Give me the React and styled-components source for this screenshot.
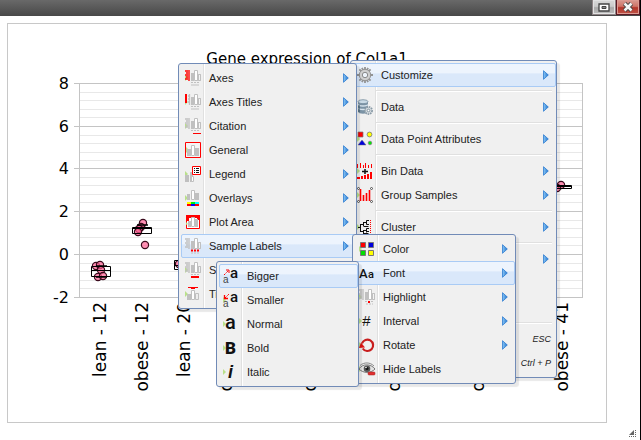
import React from "react";
import styled, { createGlobalStyle, css } from "styled-components";

const Global = createGlobalStyle`
  *, *::before, *::after { box-sizing: border-box; }
  body { margin: 0; background: #fff; font-family: "Liberation Sans", Arial, sans-serif; }
`;

const Window = styled.div`
  min-height: 100vh;
  display: flex;
  flex-direction: column;
  border-right: 1px solid #000;
  background: #fff;
  position: relative;
  overflow: hidden;
`;

const TitleBar = styled.header`
  height: 16px;
  display: flex;
  justify-content: flex-end;
  background: linear-gradient(#696969, #484848);
`;

const WindowButton = styled.button`
  width: 24px;
  height: 15px;
  padding: 0;
  display: flex;
  align-items: center;
  justify-content: center;
  border: 1px solid ${(p) => (p.$danger ? "#5c1a24" : "#8f8587")};
  border-top: 0;
  background: ${(p) =>
    p.$danger
      ? "linear-gradient(#d89a92, #cf7468 45%, #b3352a 55%, #bf5346)"
      : "linear-gradient(#d9d9d9, #cacaca 45%, #a9a9a9 55%, #bdbdbd)"};
  box-shadow: inset 0 0 0 1px ${(p) => (p.$danger ? "#dc9a92" : "#e2e2e2")};
`;

const Stage = styled.main`
  flex: 1;
  padding: 7px 33px 17px 7px;
`;

const ChartPanel = styled.section`
  border: 1px solid #c8c8c8;
`;

const ChartSvg = styled.svg`
  display: block;
  width: 100%;
  height: auto;
  font-family: "DejaVu Sans", Verdana, sans-serif;
`;

const Grip = styled.svg`
  position: absolute;
  right: 3px;
  bottom: 2px;
`;

const MenuPanel = styled.ul`
  position: absolute;
  width: ${(p) => p.$width}px;
  margin: 0;
  padding: 2px 0 2px 2px;
  list-style: none;
  border: 1px solid #718bb7;
  border-radius: 3px;
  background: linear-gradient(
      to right,
      transparent 24px,
      #e0e0e0 24px 25px,
      #fff 25px 26px,
      transparent 26px
    )
    #f0f0f0;
  box-shadow: 3px 3px 1px rgba(0, 0, 0, 0.09);
  ${(p) => p.$side === "root" && css`left: 350px; top: 60px;`}
  ${(p) => p.$side === "left" && css`right: calc(100% - 4px); top: 0;`}
  ${(p) => p.$side === "right" && css`left: calc(100% - 4px); top: 0;`}
`;

const MenuRow = styled.li`
  height: 24px;
  ${(p) => p.$open && css`position: relative; z-index: 1;`}
`;

const MenuButton = styled.button`
  width: 100%;
  height: 24px;
  padding: 0 6px 0 3px;
  display: flex;
  align-items: center;
  gap: 8px;
  border: 1px solid ${(p) => (p.$active ? "#a9cbf5" : "transparent")};
  border-radius: 2px;
  background: ${(p) =>
    p.$active ? "linear-gradient(#edf4fd 0 40%, #dae8fa 45% 100%)" : "transparent"};
  color: #222;
  font: 11px/14px "Liberation Sans", Arial, sans-serif;
  text-align: left;
`;

const Label = styled.span`
  flex: 1;
  white-space: nowrap;
`;

const Shortcut = styled.kbd`
  font: italic 9px/14px "Liberation Sans", Arial, sans-serif;
  margin-right: -2px;
`;

const Divider = styled.li`
  height: 2px;
  margin: 3px 4px 3px 23px;
  border-top: 1px solid #e0e0e0;
  border-bottom: 1px solid #fff;
`;

const IconBox = styled.svg`
  flex: none;
  width: 16px;
  height: 16px;
  overflow: visible;
`;

const Arrow = () => (
  <svg width="6" height="10" viewBox="0 0 6 10" aria-hidden="true">
    <defs>
      <linearGradient id="arrowFill" x1="0" y1="0" x2="1" y2="0">
        <stop offset="0" stopColor="#8cc8f4" />
        <stop offset="1" stopColor="#1f72cf" />
      </linearGradient>
    </defs>
    <path d="M.5 .7 5.3 5 .5 9.3Z" fill="url(#arrowFill)" stroke="#2c7bd0" strokeWidth=".8" />
  </svg>
);

const G = "#c0c0c0";
const R = "#ff0000";
const Bars = () => (
  <>
    <path d="M6 3h3v8H6zM12 4h4v7h-4z" fill={G} />
    <path d="M9.500 .5h3v10h-3z" fill="#fff" stroke={G} />
    <path d="M13.500 4.500h2v6h-2z" fill="#f4f4f4" stroke={G} />
  </>
);
const Axis = ({ color = G }) => (
  <path d="M4 0v11M0 1h3M1 3h2M0 5h3M1 7h2M0 9h3" stroke={color} strokeWidth="1.400" fill="none" />
);
const Dashes = ({ first = G }) => (
  <>
    <path d="M6 12.500h8" stroke={first} strokeWidth={first === G ? 1 : 2} strokeDasharray="2 1" />
    <path d="M6 15h8" stroke={G} strokeDasharray={first === G ? "none" : "2 1"} />
  </>
);
const Leaf = () => <path d="M0 5v6l3-3z" fill="#b9e08a" />;
const Letter = ({ x, y, size, italic, weight = 400, children, fill = "#111", family = "Liberation Sans" }) => (
  <text x={x} y={y} fontSize={size} fontWeight={weight} fontStyle={italic ? "italic" : "normal"} fontFamily={`"${family}", sans-serif`} fill={fill}>
    {children}
  </text>
);

const icons = {
  axes: <><Leaf /><Axis color={R} /><Bars /><Dashes /></>,
  axesTitles: <><Leaf /><path d="M0 0h2v9H0z" fill={R} /><path d="M4.500 0v11M3 2h1M3 5h1M3 8h1" stroke={G} strokeWidth="1.300" /><Bars /><Dashes /></>,
  citation: <><Leaf /><Axis /><Bars /><path d="M6 12.500h8" stroke={G} strokeDasharray="2 1" /><path d="M8 15.500h8" stroke={R} /></>,
  general: <><path d="M.5 .5h15v15H.5z" fill="#f4f4f4" stroke={R} /><path d="M1 5v6l3-3z" fill="#b9e08a" /><path d="M2 7h4v7H2z" fill={G} /><path d="M6.500 3.500h3v10h-3z" fill="#fff" stroke={G} /><path d="M10 6h4v8h-4z" fill={G} /></>,
  legend: <><Leaf /><path d="M0 9h4v7H0zM5 6h3v10H5z" fill={G} /><path d="M6.500 10.500h2v5h-2z" fill="#fff" stroke={G} /><path d="M7.500 .5h8v8h-8z" fill="#fff" stroke={R} /><path d="M9 2.500h1M11 2.500h3M9 4.500h1M11 4.500h3M9 6.500h1M11 6.500h3" stroke="#111" /></>,
  overlays: <><Leaf /><path d="M2 4h3v6H2z" fill={G} /><path d="M6.500 .5h3v9h-3z" fill="#fff" stroke={G} /><path d="M10 3h4v7h-4z" fill={G} /><path d="M2 12h4v2H2z" fill="#ff0" /><path d="M6 12h4v2H6z" fill="#0e0" /><path d="M10 12h4v2h-4z" fill="#0ff" /><path d="M2 14h4v2H2zM10 14h4v2h-4z" fill={R} /><path d="M6 14h4v2H6z" fill="#00f" /></>,
  plotArea: <><path d="M1.500 1.500h13v13h-13z" fill="#fff" stroke={R} /><path d="M1 1h14v3H1zM1 4h3v3H1zM12 3h3v3h-3z" fill={R} /><path d="M3 7h3v6H3z" fill={G} /><path d="M6.500 3.500h3v9h-3z" fill="#fff" stroke={G} /><path d="M10 5h3v8h-3z" fill={G} /><path d="M1 8v3l2-1z" fill="#b9e08a" /></>,
  sampleLabels: <><Axis /><Bars /><Dashes first={R} /></>,
  sampleTitles: <><Leaf /><Axis /><Bars /><path d="M6 12.500h8" stroke={G} strokeDasharray="2 1" /><path d="M6 15h8" stroke={R} strokeWidth="2" /></>,
  titles: <><Leaf /><path d="M3 1.500h10" stroke={R} /><path d="M6 2.500h4" stroke={R} /><path d="M2 8h4v6H2z" fill={G} /><path d="M6.500 4.500h3v9h-3z" fill="#fff" stroke={G} /><path d="M10.500 7.500h3v6h-3z" fill="#eee" stroke={G} /></>,
  gear: (
    <>
      <path d="M8 0v16M0 8h16M2.400 2.400l11.200 11.200M13.600 2.400 2.400 13.600M5 .8l6 14.400M11 .8 5 15.200" stroke="#949494" strokeWidth="1.800" />
      <circle cx="8" cy="8" r="5.700" fill="#cfcfcf" stroke="#949494" />
      <circle cx="8" cy="8" r="2.700" fill="#edf3fa" stroke="#8a8a8a" />
    </>
  ),
  data: (
    <>
      <path d="M1 2.500v10c0 3 10 3 10 0v-10z" fill="#7b93a5" />
      <path d="M1 5.500c1 2 9 2 10 0M1 9c1 2 9 2 10 0" stroke="#d5e2ec" strokeWidth="1.300" fill="none" />
      <ellipse cx="6" cy="2.700" rx="5" ry="2" fill="#c9dae6" stroke="#657f92" strokeWidth=".7" />
      <path d="M2 6v7" stroke="#3d596b" />
      <circle cx="11.500" cy="11.500" r="3.600" fill="#d3dadf" stroke="#899aa6" strokeWidth="1.700" strokeDasharray="1.600 .8" />
      <circle cx="11.500" cy="11.500" r="1.300" fill="#fff" stroke="#8496a2" />
    </>
  ),
  points: <><Leaf /><path d="M1 1h5v5H1z" fill={R} stroke="#777" strokeWidth=".7" /><circle cx="12.500" cy="3.500" r="2.400" fill="#ff0" stroke="#777" strokeWidth=".8" /><path d="M1 14 5 9l4 5z" fill="#00d" stroke="#777" strokeWidth=".5" /><circle cx="13" cy="12" r="1.800" fill="#0e0" stroke="#777" strokeWidth=".7" /></>,
  bin: <><Leaf /><path d="M.5 1v4M3.500 0v5M6.500 2v3M8.500 0v5M11.500 2v3M14.500 1v4" stroke={R} /><path d="M8 6v5M5 8.500h6" stroke="#111" strokeWidth="1.500" /><path d="M0 14h3v2H0zM4 13h2v3H4zM7 12h2v4H7zM10 11h2v5h-2zM13 9h2v7h-2z" fill={R} /></>,
  group: <><Leaf /><path d="M3.500 2v12M6.500 8v6M9.500 6v8M12.500 3v11" stroke={R} strokeWidth="1.600" /><g fill="#fff" stroke="#333" strokeWidth=".8"><circle cx="1.500" cy="1.500" r="1" /><circle cx="14.500" cy="1.500" r="1" /><circle cx="1.500" cy="14.500" r="1" /><circle cx="14.500" cy="14.500" r="1" /></g></>,
  cluster: <><Leaf /><path d="M1 8.500h2.500M3.500 5v8M3.500 5.500H6M3.500 12.500H6M6.500 3v4M6.500 11v4M6.500 3.500H9M6.500 7.500h5M6.500 11.500h3M6.500 14.500h5M9.500 1.500v4M9.500 1.500H12M9.500 5.500H12M9.500 9.500v4M9.500 9.500H12M9.500 12.500H12" stroke="#111" fill="none" /><path d="M13.500 1v14" stroke={R} strokeDasharray="1 1" /></>,
  color: <><Leaf /><g stroke="#777"><path d="M1.500 1.500h5v5h-5z" fill={R} /><path d="M9.500 1.500h5v5h-5z" fill="#00d" /><path d="M1.500 9.500h5v5h-5z" fill="#0d0" /><path d="M9.500 9.500h5v5h-5z" fill="#ff0" /></g></>,
  font: <><Letter x={0} y={13} size={13} weight={500} family="Roboto">A</Letter><Letter x={9} y={13} size={11} weight={500} family="Roboto">a</Letter></>,
  highlight: <><Leaf /><Axis /><Bars /><path d="M6 12.500h9M7 15h7" stroke={G} strokeDasharray="2 1" /><path d="M9 12h2v2H9z" fill={R} /></>,
  interval: <><Leaf /><Letter x={3} y={13} size={15} italic>#</Letter></>,
  rotate: <><Leaf /><path d="M3.700 11.500A5.700 5.700 0 1 0 3 6.500" fill="none" stroke="#c81e1e" strokeWidth="2.200" /><path d="M0 11 2 5.500 6 10.500z" fill="#e01414" /></>,
  hide: <><Leaf /><path d="M0 8C3 2.500 12 2.500 16 8 12 12.500 4 12.500 0 8z" fill="#e3e3e3" stroke="#777" /><circle cx="8" cy="7.700" r="3.300" fill="#555" /><circle cx="8" cy="7.500" r="1.500" fill="#111" /><circle cx="7" cy="6.500" r=".8" fill="#fff" /><path d="M1 4.500C5 1 11 1 15 5" stroke="#888" fill="none" /><rect x="9" y="11" width="7" height="3" rx="1" fill="#e03030" stroke="#a82020" strokeWidth=".5" /></>,
  bigger: <><Letter x={0} y={15} size={10} fill="#444">a</Letter><Letter x={7} y={10} size={15} weight={500} family="Roboto">a</Letter><path d="M1 7 5 3" stroke={R} strokeDasharray="1.500 .7" /><path d="M3 2h3v3" stroke={R} fill="none" /></>,
  smaller: <><Leaf /><Letter x={0} y={15} size={10} fill="#444">a</Letter><Letter x={7} y={10} size={15} weight={500} family="Roboto">a</Letter><path d="M2 6 6 2" stroke={R} strokeDasharray="1.500 .7" /><path d="M1.500 3v3.500H5" stroke={R} fill="none" strokeWidth="1.300" /></>,
  normal: <><Leaf /><Letter x={2} y={13} size={20} weight={500} family="Roboto">a</Letter></>,
  bold: <><Leaf /><Letter x={2} y={14} size={17} weight={900} family="Roboto">B</Letter></>,
  italic: <><Leaf /><Letter x={5} y={14} size={18} weight={700} italic>i</Letter></>,
};

const fontMenu = {
  width: 143,
  side: "left",
  items: [
    { icon: "bigger", label: "Bigger", active: true },
    { icon: "smaller", label: "Smaller" },
    { icon: "normal", label: "Normal" },
    { icon: "bold", label: "Bold" },
    { icon: "italic", label: "Italic" },
  ],
};

const labelsMenu = {
  width: 164,
  side: "right",
  items: [
    { icon: "color", label: "Color", more: true },
    { icon: "font", label: "Font", more: true, menu: fontMenu },
    { icon: "highlight", label: "Highlight", more: true },
    { icon: "interval", label: "Interval", more: true },
    { icon: "rotate", label: "Rotate", more: true },
    { icon: "hide", label: "Hide Labels" },
  ],
};

const customizeMenu = {
  width: 179,
  side: "left",
  items: [
    { icon: "axes", label: "Axes", more: true },
    { icon: "axesTitles", label: "Axes Titles", more: true },
    { icon: "citation", label: "Citation", more: true },
    { icon: "general", label: "General", more: true },
    { icon: "legend", label: "Legend", more: true },
    { icon: "overlays", label: "Overlays", more: true },
    { icon: "plotArea", label: "Plot Area", more: true },
    { icon: "sampleLabels", label: "Sample Labels", more: true, menu: labelsMenu },
    { icon: "sampleTitles", label: "Sample Titles", more: true },
    { icon: "titles", label: "Titles", more: true },
  ],
};

const rootMenu = {
  width: 207,
  side: "root",
  items: [
    { icon: "gear", label: "Customize", more: true, menu: customizeMenu },
    null,
    { icon: "data", label: "Data", more: true },
    null,
    { icon: "points", label: "Data Point Attributes", more: true },
    null,
    { icon: "bin", label: "Bin Data", more: true },
    { icon: "group", label: "Group Samples", more: true },
    null,
    { icon: "cluster", label: "Cluster", more: true },
    null,
    { label: "", more: true },
    { label: "" },
    { label: "" },
    null,
    { label: "", shortcut: "ESC" },
    { label: "", shortcut: "Ctrl + P" },
  ],
};

function Menu({ menu }) {
  return (
    <MenuPanel $width={menu.width} $side={menu.side} role="menu">
      {menu.items.map((item, i) =>
        item === null ? (
          <Divider key={i} role="separator" />
        ) : (
          <MenuRow key={i} $open={Boolean(item.menu)} role="none">
            <MenuButton type="button" role="menuitem" $active={item.active || item.menu}>
              <IconBox viewBox="0 0 16 16" aria-hidden="true">{icons[item.icon]}</IconBox>
              <Label>{item.label}</Label>
              {item.shortcut && <Shortcut>{item.shortcut}</Shortcut>}
              {item.more && <Arrow />}
            </MenuButton>
            {item.menu && <Menu menu={item.menu} />}
          </MenuRow>
        )
      )}
    </MenuPanel>
  );
}

const ticks = [
  [8, 83], [6, 126], [4, 168], [2, 211], [0, 254], [-2, 297],
];
const days = [12, 20, 24, 28, 34, 41];
const samples = days.flatMap((d) => [`lean - ${d}`, `obese - ${d}`]);
const boxes = [
  { x: 91, y: 266, h: 10, mid: 270, whiskers: [266, 277], dots: [[96, 266], [100, 265], [101, 270], [98, 277], [103, 276]] },
  { x: 132, y: 227, h: 6, mid: 228, whiskers: [225, 228], dots: [[143, 223], [141, 227], [139, 229], [138, 232], [145, 245]] },
  { x: 174, y: 260, h: 9, mid: 265, whiskers: [], dots: [[179, 264], [184, 266]] },
  { x: 552, y: 185, h: 3, mid: 186, whiskers: [], dots: [[561, 185], [557, 188]] },
];

function Chart() {
  return (
    <ChartSvg viewBox="8 24 598 398" role="img" aria-label="Gene expression of Col1a1">
      <text x="307" y="64" fontSize="15" textAnchor="middle">Gene expression of Col1a1</text>
      {ticks.slice(0, -1).flatMap(([, y]) =>
        [9, 17, 26, 34].map((d) => (
          <path key={y + d} d={`M80 ${y + d}.5h502`} stroke="#e8e8e8" />
        ))
      )}
      {ticks.map(([value, y]) => (
        <g key={value}>
          <path d={`M74 ${y}.5h509`} stroke="#c4c4c4" />
          <text x="69" y={y + 6} fontSize="16" textAnchor="end">{value}</text>
        </g>
      ))}
      <path d="M79.500 83v215M582.500 83v215" stroke="#c4c4c4" />
      {boxes.map((b) => (
        <g key={b.x} stroke="#000">
          {b.dots.map(([x, y], i) => (
            <circle key={i} cx={x} cy={y} r="3.600" fill="#ff5f93" fillOpacity=".7" stroke="#3a0a1c" strokeWidth="1.200" />
          ))}
          <path d={`M${b.x}.5 ${b.y}.5h19v${b.h}h-19z`} fill="none" />
          <path d={`M${b.x} ${b.mid}.5h20`} />
          {b.whiskers.map((y) => (
            <path key={y} d={`M${b.x + 5} ${y}h11`} strokeWidth="1.500" />
          ))}
        </g>
      ))}
      {samples.map((name, i) => (
        <text key={name} transform={`translate(${106 + i * 42} 302) rotate(-90)`} fontSize="17" textAnchor="end">
          {name}
        </text>
      ))}
    </ChartSvg>
  );
}

export default function App() {
  return (
    <>
      <Global />
      <Window>
        <TitleBar>
          <WindowButton type="button" aria-label="Restore">
            <svg width="12" height="9" viewBox="0 0 12 9">
              <path d="M1 1h10v7H1z" fill="#fff" stroke="#444" strokeWidth="1.300" />
              <path d="M4 3.500h4v2H4z" fill="#888" stroke="#444" />
            </svg>
          </WindowButton>
          <WindowButton type="button" aria-label="Close" $danger>
            <svg width="12" height="10" viewBox="0 0 12 10">
              <path d="M2.500 1.500l7 7M9.500 1.500l-7 7" stroke="#444" strokeWidth="4.500" />
              <path d="M2.500 1.500l7 7M9.500 1.500l-7 7" stroke="#f4f4f4" strokeWidth="2.500" />
            </svg>
          </WindowButton>
        </TitleBar>
        <Stage>
          <ChartPanel>
            <Chart />
          </ChartPanel>
        </Stage>
        <Menu menu={rootMenu} />
        <Grip width="9" height="9" viewBox="0 0 9 9" aria-hidden="true">
          <path d="M7 1h1v1H7zM7 3h1v1H7zM7 5h1v1H7zM1 7h1v1H1zM3 7h1v1H3zM5 7h1v1H5zM7 7h1v1H7z" fill="#666" />
          <path d="M6 1v5H1z" fill="#666" />
        </Grip>
      </Window>
    </>
  );
}
